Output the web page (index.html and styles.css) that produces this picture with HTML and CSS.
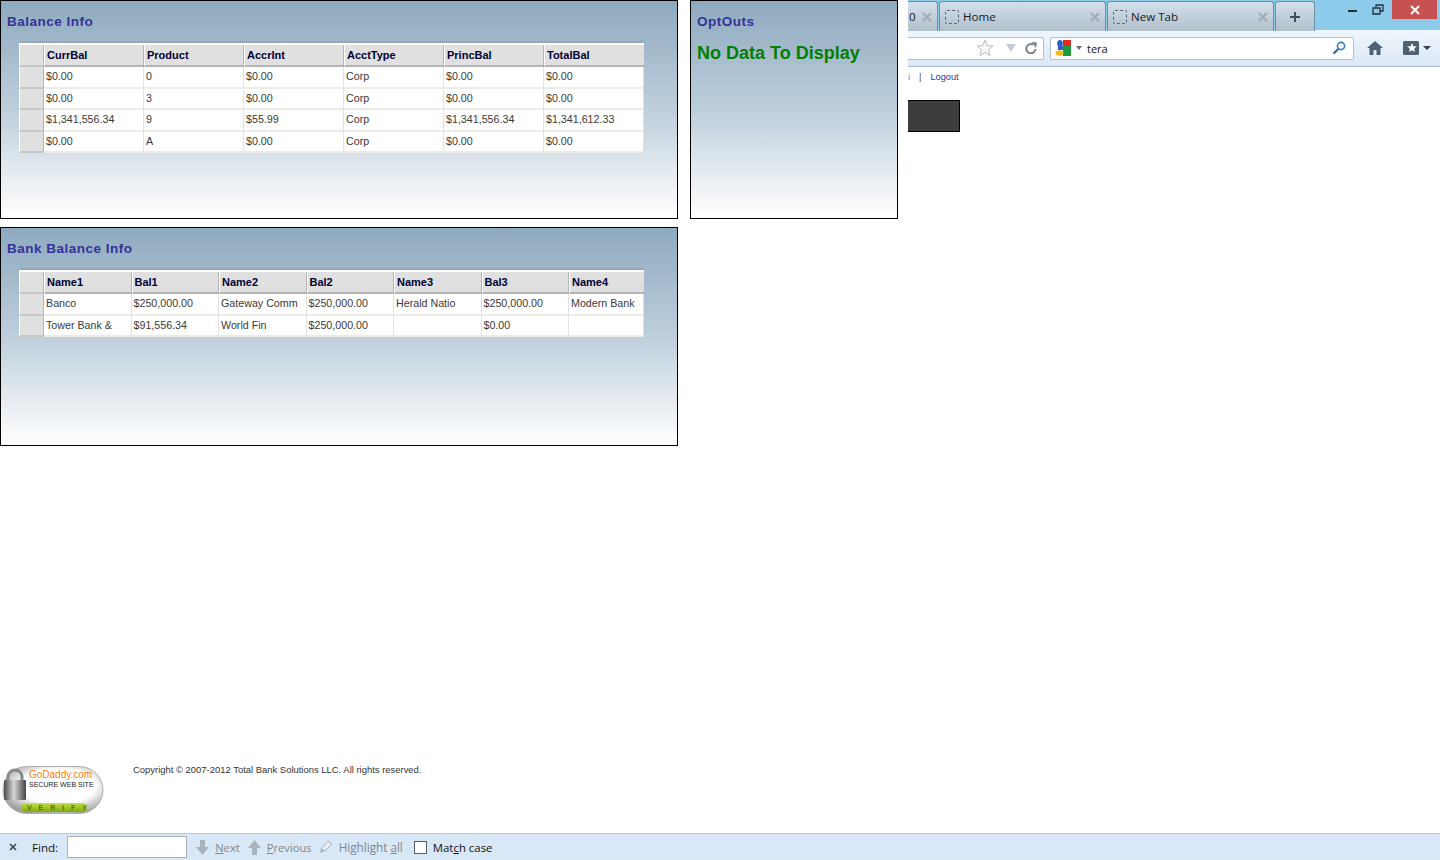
FILE: index.html
```html
<!DOCTYPE html>
<html lang="en">
<head>
    <meta charset="UTF-8">
    <title>Balance Info</title>
    <link rel="stylesheet" href="styles.css">
</head>
<body>
<div class="screen">
    <div class="top">
        <div class="app">
            <div class="panels">
                <section class="panel">
                    <h2>Balance Info</h2>
                    <table class="grid six">
                        <colgroup><col class="c-sel"><col><col><col><col><col><col></colgroup>
                        <tr><th class="sel"></th><th>CurrBal</th><th>Product</th><th>AccrInt</th><th>AcctType</th><th>PrincBal</th><th>TotalBal</th></tr>
                        <tr><td class="sel"></td><td>$0.00</td><td>0</td><td>$0.00</td><td>Corp</td><td>$0.00</td><td>$0.00</td></tr>
                        <tr><td class="sel"></td><td>$0.00</td><td>3</td><td>$0.00</td><td>Corp</td><td>$0.00</td><td>$0.00</td></tr>
                        <tr><td class="sel"></td><td>$1,341,556.34</td><td>9</td><td>$55.99</td><td>Corp</td><td>$1,341,556.34</td><td>$1,341,612.33</td></tr>
                        <tr><td class="sel"></td><td>$0.00</td><td>A</td><td>$0.00</td><td>Corp</td><td>$0.00</td><td>$0.00</td></tr>
                    </table>
                </section>
                <section class="panel">
                    <h2>OptOuts</h2>
                    <p class="nodata">No Data To Display</p>
                </section>
                <section class="panel">
                    <h2>Bank Balance Info</h2>
                    <table class="grid seven">
                        <colgroup><col class="c-sel"><col class="c-n"><col class="c-n"><col class="c-n"><col class="c-n"><col class="c-n"><col class="c-n"><col class="c-last"></colgroup>
                        <tr><th class="sel"></th><th>Name1</th><th>Bal1</th><th>Name2</th><th>Bal2</th><th>Name3</th><th>Bal3</th><th>Name4</th></tr>
                        <tr><td class="sel"></td><td>Banco</td><td>$250,000.00</td><td>Gateway Comm</td><td>$250,000.00</td><td>Herald Natio</td><td>$250,000.00</td><td>Modern Bank</td></tr>
                        <tr><td class="sel"></td><td>Tower Bank &amp;</td><td>$91,556.34</td><td>World Fin</td><td>$250,000.00</td><td></td><td>$0.00</td><td></td></tr>
                    </table>
                </section>
            </div>
            <div class="footer">
                <svg class="badge" width="102" height="48" viewBox="0 0 102 48">
                    <defs>
                        <radialGradient id="pill" cx="0.55" cy="0.42" r="0.62">
                            <stop offset="0.6" stop-color="#ffffff"/>
                            <stop offset="1" stop-color="#a0a0a0"/>
                        </radialGradient>
                        <linearGradient id="lock" x1="0" x2="1" y1="0" y2="0">
                            <stop offset="0" stop-color="#4d4d4d"/>
                            <stop offset="0.45" stop-color="#d8d8d8"/>
                            <stop offset="1" stop-color="#444"/>
                        </linearGradient>
                        <linearGradient id="verify" x1="0" x2="0" y1="0" y2="1">
                            <stop offset="0" stop-color="#c8e040"/>
                            <stop offset="1" stop-color="#7fa812"/>
                        </linearGradient>
                    </defs>
                    <rect x="1" y="0.5" width="100" height="47" rx="23.5" fill="url(#pill)" stroke="#b0b0b0"/>
                    <path d="M6 16 V11 a7 7 0 0 1 14 0 V16" fill="none" stroke="#8a8a8a" stroke-width="3"/>
                    <rect x="2" y="14" width="22" height="20" rx="1" fill="url(#lock)"/>
                    <text x="27" y="12" class="badge-name">GoDaddy.com</text>
                    <text x="27" y="21" class="badge-sub">SECURE WEB SITE</text>
                    <rect x="19" y="37" width="66" height="9" rx="4.5" fill="url(#verify)"/>
                    <text x="25" y="44" class="badge-verify">V E R I F Y</text>
                </svg>
                <p class="copy">Copyright © 2007-2012 Total Bank Solutions LLC. All rights reserved.</p>
            </div>
        </div>
        <div class="browser">
            <div class="tabstrip">
                <div class="tab cut"><span>0</span><svg class="tabx" width="10" height="10" viewBox="0 0 10 10"><path d="M1 1 L9 9 M9 1 L1 9"/></svg></div>
                <div class="tab"><i class="favicon"></i><span>Home</span><svg class="tabx" width="10" height="10" viewBox="0 0 10 10"><path d="M1 1 L9 9 M9 1 L1 9"/></svg></div>
                <div class="tab"><i class="favicon"></i><span>New Tab</span><svg class="tabx" width="10" height="10" viewBox="0 0 10 10"><path d="M1 1 L9 9 M9 1 L1 9"/></svg></div>
                <div class="tab newtab"><svg width="12" height="12" viewBox="0 0 12 12"><path d="M6 1 V11 M1 6 H11" stroke="#3d4f60" stroke-width="2"/></svg></div>
                <div class="winbtns">
                    <svg class="winbtn" width="26" height="19" viewBox="0 0 26 19"><rect x="9" y="10" width="9" height="2" fill="#22303c"/></svg>
                    <svg class="winbtn restore" width="14" height="19" viewBox="0 0 14 19"><path d="M4 7 V5 H11 V11 H8 M1 8 H8 V14 H1 Z" fill="none" stroke="#22303c" stroke-width="1.3"/></svg>
                    <div class="close"><svg width="10" height="10" viewBox="0 0 10 10"><path d="M1 1 L9 9 M9 1 L1 9" stroke="#fff" stroke-width="2"/></svg></div>
                </div>
            </div>
            <div class="navbar">
                <div class="urlbar">
                    <svg width="18" height="18" viewBox="0 0 18 18"><path d="M9 1 L11.3 6.6 L17 7 L12.6 10.8 L14 16.6 L9 13.5 L4 16.6 L5.4 10.8 L1 7 L6.7 6.6 Z" fill="#f4f6f8" stroke="#b9c0c6"/></svg>
                    <svg class="drop" width="10" height="8" viewBox="0 0 10 8"><path d="M0 0 H10 L5 8 Z" fill="#c3ccd4"/></svg>
                    <svg width="12" height="12" viewBox="0 0 12 12"><path d="M10.5 7 A4.6 4.6 0 1 1 8 2.6" fill="none" stroke="#77838e" stroke-width="2"/><path d="M6.5 0 L12 0.5 L11 6 Z" fill="#77838e"/></svg>
                </div>
                <div class="searchbar">
                    <svg width="17" height="16" viewBox="0 0 17 16">
                        <rect x="8" y="0" width="8" height="6" fill="#e02a20"/>
                        <ellipse cx="5" cy="3.5" rx="2.8" ry="3.5" fill="#2a5fc4"/>
                        <rect x="8" y="6" width="8" height="10" fill="#1f9a3c"/>
                        <ellipse cx="4.5" cy="13" rx="4" ry="2.8" fill="#f2bb1d"/>
                        <rect x="3" y="6" width="5" height="4" fill="#2a5fc4"/>
                    </svg>
                    <svg class="gdrop" width="6" height="4" viewBox="0 0 6 4"><path d="M0 0 H6 L3 4 Z" fill="#66727d"/></svg>
                    <span class="query">tera</span>
                    <svg class="glass" width="14" height="14" viewBox="0 0 14 14"><circle cx="9" cy="5" r="3.6" fill="none" stroke="#3b7cb8" stroke-width="1.6"/><path d="M6.2 8 L1.5 12.6" stroke="#2f6ea8" stroke-width="2.2"/></svg>
                </div>
                <svg class="home" width="16" height="14" viewBox="0 0 16 14"><path d="M8 0 L16 7 H13.5 V14 H9.5 V9 H6.5 V14 H2.5 V7 H0 Z" fill="#4e6274"/></svg>
                <div class="bookmarks">
                    <svg width="16" height="14" viewBox="0 0 16 14"><rect width="16" height="14" rx="1.5" fill="#4e6274"/><path d="M9 2 L10.4 5.2 L13.6 5.5 L11.2 7.7 L11.9 11 L9 9.3 L6.1 11 L6.8 7.7 L4.4 5.5 L7.6 5.2 Z" fill="#fff"/></svg>
                    <svg width="8" height="4" viewBox="0 0 8 4"><path d="M0 0 H8 L4 4 Z" fill="#33424f"/></svg>
                </div>
            </div>
            <div class="userlinks"><a class="cutlink">i</a><span class="pipe">|</span><a>Logout</a></div>
            <div class="darkbox"></div>
        </div>
    </div>
    <div class="findbar">
        <svg class="findx" width="8" height="8" viewBox="0 0 8 8"><path d="M1 1 L7 7 M7 1 L1 7" stroke="#3a4652" stroke-width="1.6"/></svg>
        <label class="findlabel">Find:</label>
        <input class="findinput" type="text">
        <svg class="arrow" width="13" height="15" viewBox="0 0 13 15"><path d="M4 0 H9 V7 H13 L6.5 15 L0 7 H4 Z" fill="#a9b2ba"/></svg>
        <span class="findbtn next"><u>N</u>ext</span>
        <svg class="arrow up" width="13" height="15" viewBox="0 0 13 15"><path d="M4 15 H9 V8 H13 L6.5 0 L0 8 H4 Z" fill="#a9b2ba"/></svg>
        <span class="findbtn prev"><u>P</u>revious</span>
        <svg class="pen" width="14" height="14" viewBox="0 0 14 14"><path d="M9 1 L13 4 L6 11 L2 9 Z" fill="#e6ebef" stroke="#aab3bb"/><path d="M2 9 L6 11 L1 13 Z" fill="#aab3bb"/></svg>
        <span class="findbtn high">Highlight <u>a</u>ll</span>
        <input class="findcheck" type="checkbox">
        <span class="matchcase">Mat<u>c</u>h case</span>
    </div>
</div>
</body>
</html>
```

FILE: styles.css
```css
html, body {
    margin: 0;
    padding: 0;
    background: #fff;
    font-family: "Liberation Sans", Arial, sans-serif;
}
.screen {
    display: flex;
    flex-direction: column;
    width: 1440px;
    height: 860px;
    overflow: hidden;
}
.top {
    display: flex;
    flex: 1;
    min-height: 0;
}

/* left side: the application */
.app {
    display: flex;
    flex-direction: column;
    justify-content: space-between;
    width: 908px;
}
.panels {
    display: grid;
    grid-template-columns: 678px 208px;
    grid-template-rows: 219px 219px;
    column-gap: 12px;
    row-gap: 8px;
}
.panel {
    box-sizing: border-box;
    border: 1px solid #000;
    padding: 13px 6px 0;
    background: linear-gradient(#8eaabf 0%, #a3b9cb 22%, #c3d3df 55%, #e0e7ed 75%, #ffffff 100%);
}
.panel h2 {
    margin: 0;
    height: 16px;
    font-size: 13.5px;
    line-height: 16px;
    letter-spacing: 0.5px;
    font-weight: bold;
    color: #333399;
}
.nodata {
    margin: 13px 0 0;
    font-size: 18px;
    line-height: 20px;
    font-weight: bold;
    color: #008000;
}

/* data grids */
.grid {
    table-layout: fixed;
    width: 625px;
    margin: 13px 0 0 12px;
    border-collapse: separate;
    border-spacing: 0;
    border-top: 2px solid #fff;
    box-shadow: 0 -2px 2px -1px rgba(80, 100, 120, 0.35);
    background: #fff;
    font-size: 10.7px;
}
.c-sel { width: 25px; }
.c-n { width: 87.5px; }
.c-last { width: 75px; }
.grid th, .grid td {
    box-sizing: border-box;
    overflow: hidden;
    white-space: nowrap;
}
.grid th {
    height: 22px;
    padding: 0 2px;
    text-align: left;
    font-size: 11px;
    color: #000033;
    background: #e0e0e0;
    border-left: 1px solid #fff;
    border-right: 1px solid #b5b5b5;
    border-bottom: 2px solid #b5b5b5;
}
.grid td {
    height: 21.5px;
    padding: 0 2px 1px;
    color: #3a3a3a;
    background: #fff;
    border-right: 1px solid #e4e2dc;
    border-bottom: 2px solid #ecebe6;
}
.grid .sel {
    padding: 0;
    background: #e0e0e0;
    border-left: 1px solid #fff;
    border-right: 1px solid #b5b5b5;
    border-bottom-color: #c8c8c8;
}
.grid th:last-child { border-right: 0; }

/* footer */
.footer {
    display: flex;
    align-items: flex-start;
    padding: 0 0 19px 2px;
}
.badge { flex: none; }
.badge-name { font: 10px "Liberation Sans", sans-serif; fill: #f58220; }
.badge-sub { font: 7px "Liberation Sans", sans-serif; fill: #222; }
.badge-verify { font: 7px "Liberation Sans", sans-serif; fill: #35450a; word-spacing: 5px; }
.copy {
    margin: -2px 0 0 29px;
    font-size: 9.45px;
    line-height: 12px;
    color: #333;
}

/* right side: the browser window behind it */
.browser {
    width: 532px;
    font-family: "Open Sans", "Noto Sans", sans-serif;
}
.tabstrip {
    display: flex;
    gap: 1px;
    height: 30px;
    box-sizing: border-box;
    background: #8ccbea;
}
.tab {
    display: flex;
    align-items: center;
    box-sizing: border-box;
    width: 167px;
    height: 30px;
    margin-top: 1px;
    padding: 0 5px 0 5px;
    border: 1px solid #6a8fa8;
    border-bottom: 0;
    border-radius: 3px 3px 0 0;
    background: linear-gradient(#d3e0eb, #b1bfcb);
    color: #1a1a1a;
    font-size: 11.6px;
}
.tab.cut {
    width: 30px;
    padding-left: 1px;
    border-left: 0;
    border-radius: 0 3px 0 0;
}
.tab.newtab {
    width: 40px;
    justify-content: center;
    padding: 0;
}
.favicon {
    flex: none;
    width: 12px;
    height: 12px;
    margin-right: 4px;
    border: 1px dashed #5d6872;
    border-radius: 2px;
}
.tabx {
    margin-left: auto;
    fill: none;
    stroke: #a3acb4;
    stroke-width: 2;
}
.winbtns {
    display: flex;
    align-items: flex-start;
    margin-left: 23px;
}
.winbtn { flex: none; }
.restore { margin-left: 7px; }
.close {
    display: flex;
    align-items: center;
    justify-content: center;
    width: 45px;
    height: 19px;
    margin-left: 6px;
    background: #c75050;
}
.navbar {
    display: flex;
    align-items: center;
    height: 37px;
    box-sizing: border-box;
    border-bottom: 1px solid #a9bccf;
    background: linear-gradient(#eff6fd, #dbe8f6);
}
.urlbar {
    display: flex;
    align-items: center;
    justify-content: flex-end;
    gap: 8px;
    box-sizing: border-box;
    width: 136px;
    height: 23px;
    padding-right: 6px;
    background: #fff;
    border: 1px solid #b0c0d0;
    border-left: 0;
    border-radius: 0 2px 2px 0;
}
.drop { margin: 0 1px 0 4px; }
.searchbar {
    display: flex;
    align-items: center;
    box-sizing: border-box;
    width: 304px;
    height: 23px;
    margin-left: 6px;
    padding: 0 7px 0 4px;
    background: #fff;
    border: 1px solid #b0c0d0;
    border-radius: 2px;
}
.gdrop { margin-left: 4px; }
.query {
    margin-left: 5px;
    font-size: 11px;
    color: #111;
}
.glass { margin-left: auto; }
.home { margin-left: 13px; }
.bookmarks {
    display: flex;
    align-items: center;
    gap: 4px;
    margin-left: 20px;
}
.userlinks {
    display: flex;
    gap: 8px;
    height: 20px;
    padding-top: 4px;
    box-sizing: border-box;
    font-family: "Liberation Sans", sans-serif;
    font-size: 9.2px;
    line-height: 12px;
    color: #333399;
}
.cutlink { color: #3d8fd0; }
.pipe { color: #445; margin: 0 1px; }
.darkbox {
    width: 52px;
    height: 32px;
    margin-top: 13px;
    box-sizing: border-box;
    background: #3d3d3d;
    border: 1px solid #000;
    border-left: 0;
}

/* find bar */
.findbar {
    display: flex;
    align-items: center;
    flex: none;
    box-sizing: border-box;
    height: 27px;
    padding-left: 9px;
    border-top: 1px solid #b5c7d9;
    background: #d9e8f7;
    font-family: "Open Sans", "Noto Sans", sans-serif;
    font-size: 11.2px;
    color: #111;
}
.findlabel { margin-left: 15px; font-size: 11.6px; }
.findinput {
    box-sizing: border-box;
    width: 120px;
    height: 22px;
    margin: 0 0 0 9px;
    padding: 0;
    border: 1px solid #a9b2ba;
    background: #fff;
}
.arrow { margin-left: 9px; }
.arrow.up { margin-left: 8px; }
.findbtn { color: #7d8790; }
.next { margin-left: 6px; }
.prev { margin-left: 6px; }
.pen { margin-left: 7px; }
.high { margin-left: 6px; font-size: 11.7px; }
.findcheck {
    appearance: none;
    box-sizing: border-box;
    width: 13px;
    height: 13px;
    margin: 0 0 0 11px;
    border: 1px solid #55606a;
    background: #fff;
}
.matchcase { margin-left: 6px; font-size: 11.4px; }
```
